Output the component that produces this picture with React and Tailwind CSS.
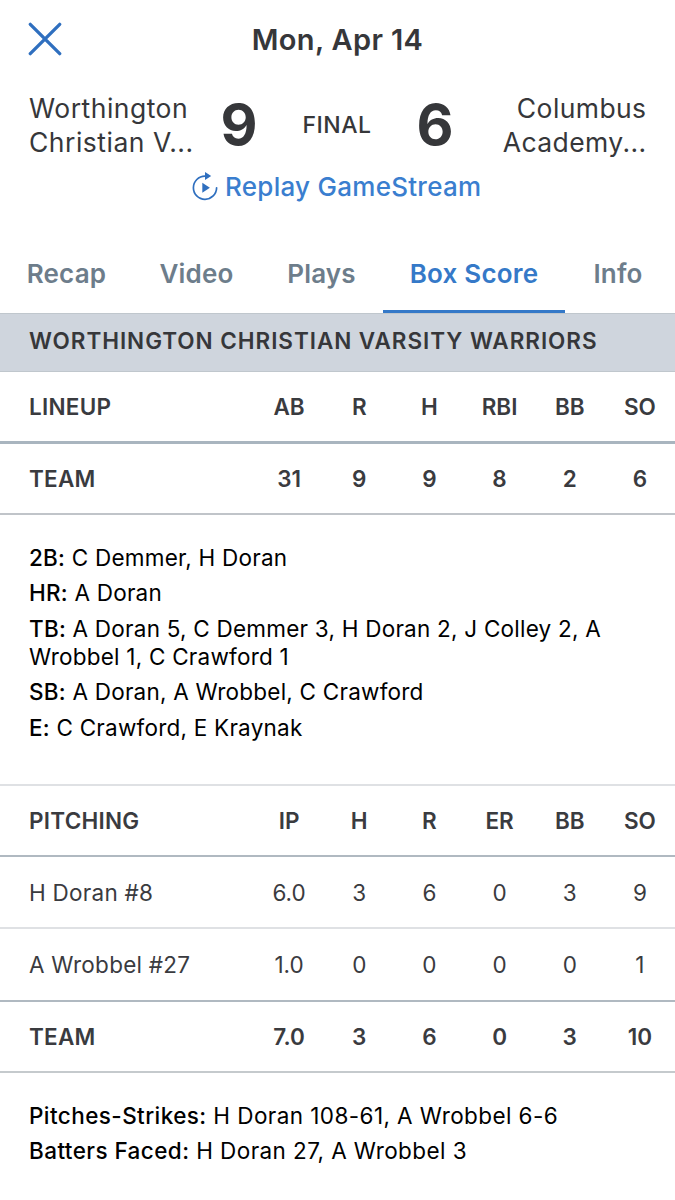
import React from 'react';

const tabs = [
  { name: 'Recap', className: 'ml-[27px] w-[79px]' },
  { name: 'Video', className: 'ml-[54px] w-[73px]' },
  { name: 'Plays', className: 'ml-[55px] w-[67px]' },
  { name: 'Box Score', active: true, className: 'ml-[28px] w-[182px]' },
  { name: 'Info', className: 'ml-[29px] w-[48px]' }
];

const lineupColumns = ['AB', 'R', 'H', 'RBI', 'BB', 'SO'];
const lineupTeam = ['31', '9', '9', '8', '2', '6'];

const lineupNotes = [
  { label: '2B', text: 'C Demmer, H Doran' },
  { label: 'HR', text: 'A Doran' },
  { label: 'TB', text: 'A Doran 5, C Demmer 3, H Doran 2, J Colley 2, A Wrobbel 1, C Crawford 1' },
  { label: 'SB', text: 'A Doran, A Wrobbel, C Crawford' },
  { label: 'E', text: 'C Crawford, E Kraynak' }
];

const pitchingColumns = ['IP', 'H', 'R', 'ER', 'BB', 'SO'];
const pitchers = [
  { name: 'H Doran #8', stats: ['6.0', '3', '6', '0', '3', '9'], className: 'h-[72px] border-b-2 border-[#dfe1e4] pt-[2px]' },
  { name: 'A Wrobbel #27', stats: ['1.0', '0', '0', '0', '0', '1'], className: 'h-[73px] border-b-2 border-[#b0b9c1]' }
];
const pitchingTeam = ['7.0', '3', '6', '0', '3', '10'];

const pitchingNotes = [
  { label: 'Pitches-Strikes', text: 'H Doran 108-61, A Wrobbel 6-6' },
  { label: 'Batters Faced', text: 'H Doran 27, A Wrobbel 3' }
];

const ReplayIcon = () => (
  <svg width="26" height="30" viewBox="0 0 26 30" fill="none" className="text-[#2f6fbf]">
    <path d="M15 5.1H13A11.6 11.6 0 1 0 24.6 16.8" stroke="currentColor" strokeWidth="1.7" strokeLinecap="round" />
    <path d="M13 1l6.2 4L13 9z" fill="currentColor" />
    <path d="M10.3 11.8l7.6 5-7.6 5z" fill="currentColor" />
  </svg>
);

const StatRow = ({ label, stats, className }) => (
  <div className={`flex items-center pl-[29px] text-[22.5px] text-[#3a3b3f] ${className}`}>
    <div className="w-[225px] shrink-0 tracking-[0.25px]">{label}</div>
    <div className="grid flex-1 grid-cols-6 text-center">
      {stats.map((stat, i) => (
        <div key={i}>{stat}</div>
      ))}
    </div>
  </div>
);

const Notes = ({ notes, className }) => (
  <div className={`flex flex-col gap-[7.5px] pl-[29px] text-[22.5px] leading-[28px] text-black ${className}`}>
    {notes.map((note) => (
      <p key={note.label}>
        <span className="font-medium">{note.label}:</span> {note.text}
      </p>
    ))}
  </div>
);

const App = () => {
  return (
    <div className="flex h-[1200px] w-[675px] flex-col overflow-hidden bg-white font-['Inter',sans-serif] text-[#36373a]">
      <header className="grid h-[80px] shrink-0 grid-cols-[80px_1fr_80px] items-center">
        <button className="-mt-[2px] pl-[28px]" aria-label="Close">
          <svg width="34" height="34" viewBox="0 0 34 34" fill="none">
            <path d="M2.3 2.3l29.4 29.4M31.7 2.3L2.3 31.7" stroke="#2f6fbf" strokeWidth="3.3" strokeLinecap="round" />
          </svg>
        </button>
        <h1 className="text-center text-[29px] font-semibold tracking-[0.35px]">Mon, Apr 14</h1>
      </header>

      {/* Scoreboard */}
      <div className="flex h-[82px] shrink-0 items-center pt-[8px] pl-[29px]">
        <div className="w-[180px] text-[26.5px] leading-[34px] tracking-[0.5px] whitespace-nowrap">
          Worthington
          <br />
          Christian V...
        </div>
        <div className="w-[60px] pb-[2px] text-center text-[57px] leading-none font-bold">9</div>
        <div className="w-[136px] text-center text-[23px] font-medium tracking-[0.5px]">FINAL</div>
        <div className="w-[60px] pb-[2px] text-center text-[57px] leading-none font-bold">6</div>
        <div className="w-[181.5px] text-right text-[26.5px] leading-[34px] tracking-[0.4px] whitespace-nowrap">
          Columbus
          <br />
          Academy...
        </div>
      </div>

      <button className="flex h-[50px] shrink-0 items-center pb-[2px] pl-[192px] text-[26px] font-medium text-[#3a7ecf]">
        <ReplayIcon />
        <span className="ml-[7px] tracking-[0.27px]">Replay GameStream</span>
      </button>

      <nav className="flex h-[101px] shrink-0 items-end text-[26px] font-semibold tracking-[0.2px] text-[#6d7d8b]">
        {tabs.map((tab) => (
          <div
            key={tab.name}
            className={`flex h-[77px] items-center justify-center whitespace-nowrap border-b-[3px] ${tab.active ? 'border-[#3579c8] text-[#3579c8]' : 'border-transparent'} ${tab.className}`}
          >
            {tab.name}
          </div>
        ))}
      </nav>

      <h2 className="flex h-[59px] shrink-0 items-center border-y border-[#c0c7cd] bg-[#cfd5dd] pb-[4px] pl-[29px] text-[22.5px] font-semibold tracking-[0.95px]">
        WORTHINGTON CHRISTIAN VARSITY WARRIORS
      </h2>

      <StatRow label="LINEUP" stats={lineupColumns} className="h-[72px] shrink-0 border-b-[3px] border-[#a9b5bf] font-semibold" />
      <StatRow label="TEAM" stats={lineupTeam} className="h-[71px] shrink-0 border-b-2 border-[#c0c4c9] font-semibold" />
      <Notes notes={lineupNotes} className="h-[269px] shrink-0 pt-[28.5px] tracking-[0.23px]" />

      <StatRow label="PITCHING" stats={pitchingColumns} className="h-[73px] shrink-0 border-t-2 border-b-2 border-t-[#dfe1e4] border-b-[#b0b9c1] font-semibold" />
      {pitchers.map((pitcher) => (
        <StatRow key={pitcher.name} label={pitcher.name} stats={pitcher.stats} className={`shrink-0 ${pitcher.className}`} />
      ))}
      <StatRow label="TEAM" stats={pitchingTeam} className="h-[71px] shrink-0 border-b-2 border-[#c5cacd] font-semibold" />
      <Notes notes={pitchingNotes} className="pt-[28.5px] tracking-[0.42px]" />
    </div>
  );
};

export default App;
